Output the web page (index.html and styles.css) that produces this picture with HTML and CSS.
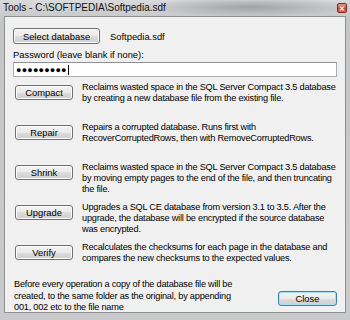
FILE: index.html
```html
<!DOCTYPE html>
<html lang="en">
<head>
  <meta charset="UTF-8">
  <meta name="viewport" content="width=device-width, initial-scale=1.0">
  <title>Tools</title>
  <link rel="stylesheet" href="styles.css">
</head>
<body>
  <div class="finestra">
    <div class="titolo">
      <span class="titolo-testo">Tools - C:\SOFTPEDIA\Softpedia.sdf</span>
      <span class="chiudi">&#x2715;</span>
    </div>
    <div class="client">
      <div class="riga-db">
        <button class="btn btn-db">Select database</button>
        <span class="nome-file">Softpedia.sdf</span>
      </div>
      <div class="etichetta">Password (leave blank if none):</div>
      <div class="campo">&#9679;&#9679;&#9679;&#9679;&#9679;&#9679;&#9679;&#9679;&#9679;<span class="cursore"></span></div>

      <div class="op">
        <button class="btn">Compact</button>
        <p>Reclaims wasted space in the SQL Server Compact 3.5 database by creating a new database file from the existing file.</p>
      </div>
      <div class="op">
        <button class="btn">Repair</button>
        <p>Repairs a corrupted database. Runs first with RecoverCorruptedRows, then with RemoveCorruptedRows.</p>
      </div>
      <div class="op">
        <button class="btn">Shrink</button>
        <p>Reclaims wasted space in the SQL Server Compact 3.5 database by moving empty pages to the end of the file, and then truncating the file.</p>
      </div>
      <div class="op">
        <button class="btn">Upgrade</button>
        <p>Upgrades a SQL CE database from version 3.1 to 3.5. After the upgrade, the database will be encrypted if the source database was encrypted.</p>
      </div>
      <div class="op">
        <button class="btn">Verify</button>
        <p>Recalculates the checksums for each page in the database and compares the new checksums to the expected values.</p>
      </div>

      <div class="piede">
        <p>Before every operation a copy of the database file will be created, to the same folder as the original, by appending 001, 002 etc to the file name</p>
        <button class="btn btn-chiudi">Close</button>
      </div>
    </div>
  </div>
</body>
</html>
```

FILE: styles.css
```css
body {
  margin: 0;
  background-color: #c6c8ca;
  font-family: "Liberation Sans", Arial, sans-serif;
  font-size: 9.2px;
  color: #000;
}
.finestra {
  width: 350px;
  height: 320px;
  background:
    radial-gradient(ellipse 110px 10px at 250px 7px, rgba(120, 122, 124, 0.55), rgba(120, 122, 124, 0) 100%),
    linear-gradient(to bottom, #d9dadb, #c4c6c8 20px, #c8cacc);
  display: flex;
  flex-direction: column;
}
.titolo {
  position: relative;
  height: 15px;
  display: flex;
  align-items: center;
  padding-left: 3px;
}
.titolo-testo {
  font-size: 10px;
  color: #111;
}
.chiudi {
  position: absolute;
  right: 3px;
  top: 3px;
  width: 10px;
  height: 10px;
  border: 1px solid #7a2a20;
  border-radius: 2px;
  background: linear-gradient(to bottom, #e8a08e, #c84a33 55%, #d86a50);
  color: #fff;
  font-size: 7px;
  font-weight: bold;
  line-height: 9px;
  text-align: center;
  box-sizing: border-box;
}
.client {
  margin: 1px 4px 0 4px;
  height: 297px;
  border: 1px solid #8e8f8f;
  background-color: #f0f0f0;
  padding: 11px 8px 0 8px;
  box-sizing: border-box;
}
.btn {
  font-family: inherit;
  font-size: 9.4px;
  color: #000;
  height: 15px;
  padding: 0;
  border: 1px solid #707070;
  border-radius: 3px;
  background: linear-gradient(to bottom, #f2f2f2, #ebebeb 50%, #dddddd 50%, #cfcfcf);
  box-shadow: inset 0 0 0 1px #fcfcfc;
  cursor: pointer;
}
.riga-db {
  display: flex;
  align-items: center;
  gap: 10px;
}
.btn-db {
  width: 87px;
  height: 16px;
}
.nome-file {
  font-size: 9.4px;
}
.etichetta {
  margin-top: 5px;
  line-height: 11px;
  font-size: 9.4px;
}
.campo {
  margin-top: 2px;
  margin-bottom: 8px;
  width: 324px;
  height: 15px;
  box-sizing: border-box;
  border: 1px solid #abadb3;
  border-top-color: #8e9095;
  background: #fff;
  font-size: 9px;
  letter-spacing: 0.2px;
  padding-left: 2px;
  display: flex;
  align-items: center;
}
.cursore {
  display: inline-block;
  width: 1px;
  height: 10px;
  background: #000;
  margin-left: 1px;
}
.op {
  display: flex;
  align-items: flex-start;
  height: 40px;
  padding-left: 2px;
}
.op .btn {
  width: 58px;
  flex: none;
}
.op p {
  margin: -3px 0 0 9px;
  line-height: 11px;
  width: 258px;
  letter-spacing: -0.22px;
}
.piede {
  display: flex;
  align-items: flex-end;
  justify-content: space-between;
  margin-top: -6px;
}
.piede p {
  margin: 0 0 0 1px;
  width: 236px;
  line-height: 11.5px;
  letter-spacing: -0.22px;
}
.btn-chiudi {
  width: 59px;
  height: 15px;
  margin-bottom: 8px;
  border-color: #3c7fb1;
  box-shadow: inset 0 0 0 1px #a8e0f8;
}
```
